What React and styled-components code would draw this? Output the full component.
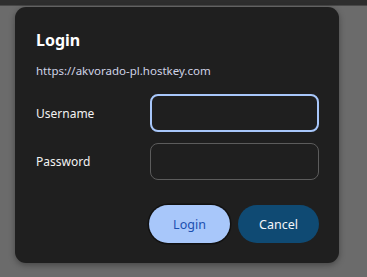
import React, {useState} from 'react';
import styled, {createGlobalStyle} from 'styled-components';

const GlobalStyle = createGlobalStyle`
    html, body {
        margin: 0;
        padding: 0;
        background: #6b6b6b;
        font-family: "Noto Sans", "Open Sans", sans-serif;
    }
`;

function App() {
    const [username, setUsername] = useState("");
    const [password, setPassword] = useState("");

    return (
        <>
            <GlobalStyle />
            <Page>
                <TopBar />
                <Backdrop>
                    <Dialog>
                        <Title>Login</Title>
                        <Url>https://akvorado-pl.hostkey.com</Url>
                        <Form>
                            <Label>Username</Label>
                            <Field focused value={username} onChange={(e) => setUsername(e.target.value)} />
                            <Label>Password</Label>
                            <Field type="password" value={password} onChange={(e) => setPassword(e.target.value)} />
                        </Form>
                        <Actions>
                            <Button primary>Login</Button>
                            <Button>Cancel</Button>
                        </Actions>
                    </Dialog>
                </Backdrop>
            </Page>
        </>
    )
}

export default App;

const Page = styled.div`
    width: 367px;
    height: 277px;
    background: #6b6b6b;
    overflow: hidden;
`;
const TopBar = styled.div`
    height: 5px;
    background: #2e2e2e;
    border-bottom: 1px solid #484848;
`;
const Backdrop = styled.div`
    padding: 1px 28px 0 15px;
`;
const Dialog = styled.div`
    box-sizing: border-box;
    width: 324px;
    height: 256px;
    background: #1f1f1f;
    border-radius: 11px;
    box-shadow: 0 2px 6px rgba(0,0,0,0.35);
    padding: 22px 20px 0 21px;
`;
const Title = styled.h2`
    margin: 0;
    color: #fff;
    font-size: 16px;
    font-weight: 700;
    line-height: 22px;
`;
const Url = styled.div`
    margin-top: 12px;
    color: #cfd3e6;
    font-size: 11.5px;
    line-height: 16px;
`;
const Form = styled.div`
    margin-top: 15px;
    display: grid;
    grid-template-columns: 114px 169px;
    row-gap: 11px;
    align-items: center;
`;
const Label = styled.div`
    color: #f2f2f2;
    font-size: 12px;
`;
const Field = styled.input`
    box-sizing: border-box;
    width: 169px;
    height: ${p => p.focused ? "38px" : "37px"};
    background: #1f1f1f;
    border: ${p => p.focused ? "2px solid #a8c7fa" : "1.5px solid #5c5c5c"};
    border-radius: 8px;
    outline: none;
    color: #fff;
    padding: 0 10px;
    font-family: inherit;
`;
const Actions = styled.div`
    margin-top: 25px;
    display: flex;
    justify-content: flex-end;
    gap: 8px;
`;
const Button = styled.div`
    width: 81px;
    height: 38px;
    border-radius: 19px;
    display: flex;
    align-items: center;
    justify-content: center;
    font-size: 12.5px;
    cursor: pointer;
    background: ${p => p.primary ? "#a8c7fa" : "#0f4a73"};
    color: ${p => p.primary ? "#1b4fb0" : "#f4f6fa"};
    box-shadow: ${p => p.primary ? "0 0 0 1.5px #111" : "none"};
`;
